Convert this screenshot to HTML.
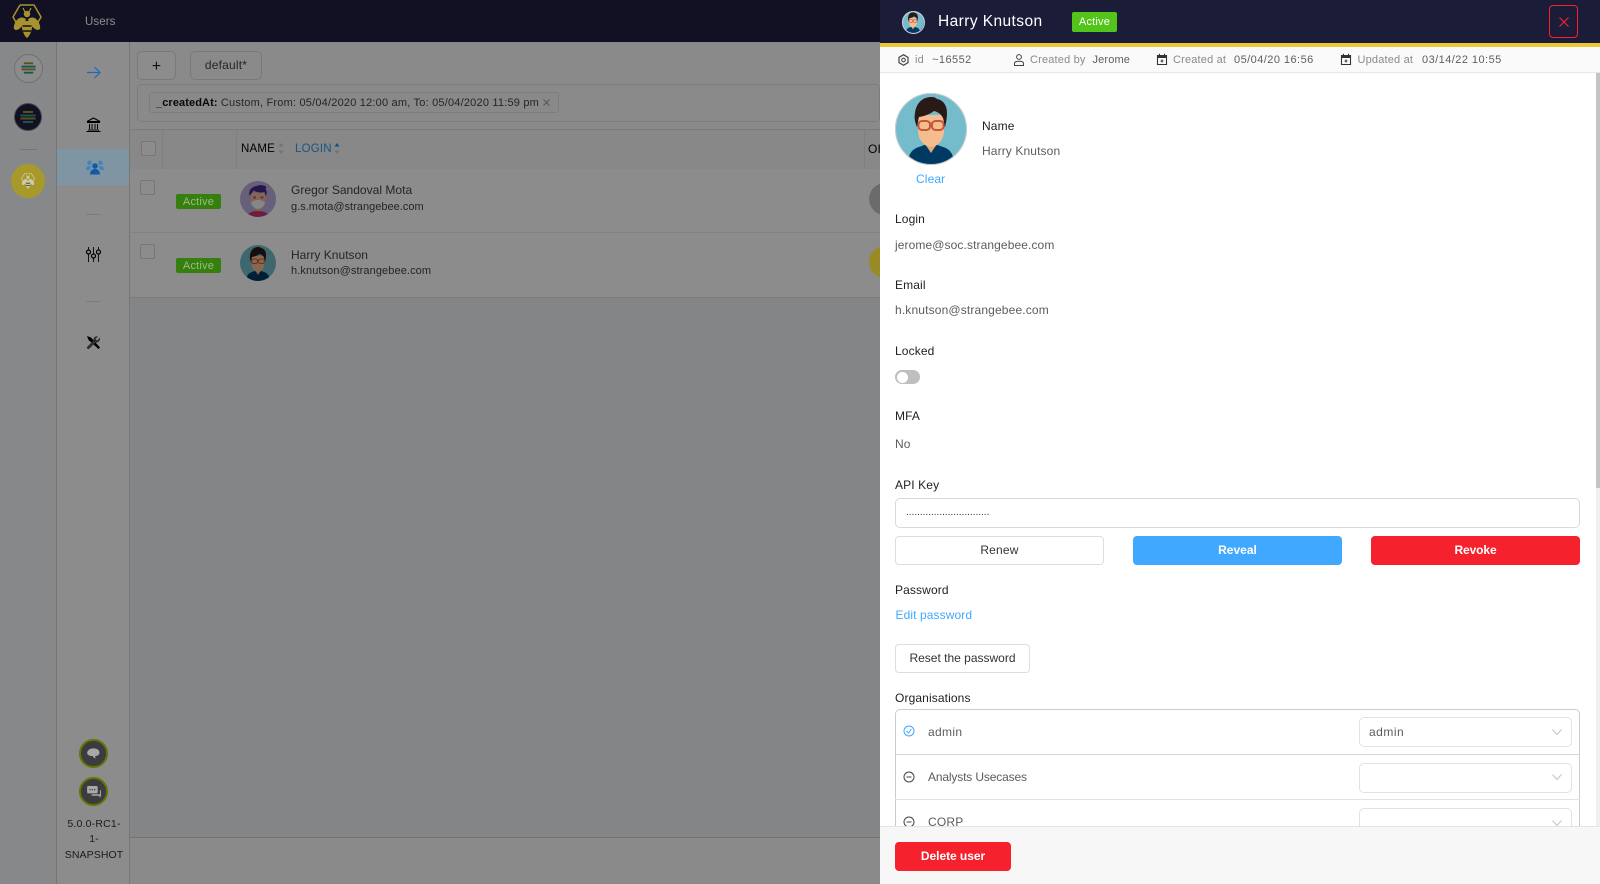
<!DOCTYPE html>
<html><head><meta charset="utf-8"><title>Users</title>
<style>
html,body{margin:0;padding:0;width:1600px;height:884px;overflow:hidden;background:#f0f0f1;font-family:"Liberation Sans",sans-serif;}
.a{position:absolute;box-sizing:border-box}
.t{position:absolute;white-space:nowrap;transform:translateY(-50%);font-size:12px;line-height:16px;color:#5c5c5c;letter-spacing:.12px}
.l{color:#1f1f1f}
.m{font-size:11px;color:#8a8a8a;letter-spacing:.18px}
.v{font-size:11px;color:#5e5e5e;letter-spacing:.3px}
.btn{position:absolute;box-sizing:border-box;border:1px solid #ddd;border-radius:4px;background:#fff;text-align:center;font-size:12px;line-height:26px;color:#333;letter-spacing:.2px}
.sel{position:absolute;box-sizing:border-box;width:213.500px;height:30px;border:1px solid #e2e2e2;border-radius:5px;background:#fff}
svg{position:absolute;overflow:visible}
</style></head><body>
<svg width="0" height="0" style="position:absolute"><defs>
<symbol id="harry" viewBox="0 0 72 72">
<clipPath id="c1"><circle cx="36" cy="36" r="36"/></clipPath>
<g clip-path="url(#c1)"><rect width="72" height="72" fill="#74bccc"/>
<path d="M13 72c0-11 4-16 11-18l8-3 4 8 4-8 8 3c7 2 11 7 11 18z" fill="#003a63"/>
<path d="M30 44h12v7l-6 9-6-9z" fill="#e5a877"/>
<path d="M23 22h26v16c0 9-7 16-13 16s-13-7-13-16z" fill="#f5bd8e"/>
<path d="M22 34c-2-5-3-9-2-14 1-9 7-16 16-16 2 0 4 0 6 2 6 1 10 6 10 14 0 5-1 10-2 14-1-2-1-6-2-9-2-4-5-6-9-7-4 3-9 5-15 6-1 3-1 7-2 10z" fill="#2a1a17"/>
<rect x="23.500" y="28" width="11.500" height="9" rx="3.500" fill="none" stroke="#c9573f" stroke-width="2"/>
<rect x="37" y="28" width="11.500" height="9" rx="3.500" fill="none" stroke="#c9573f" stroke-width="2"/>
<path d="M35 30h2" stroke="#c9573f" stroke-width="1.500"/></g>
</symbol>
<symbol id="greg" viewBox="0 0 72 72">
<clipPath id="c2"><circle cx="36" cy="36" r="36"/></clipPath>
<g clip-path="url(#c2)"><rect width="72" height="72" fill="#bdb0e0"/>
<path d="M14 72c1-8 9-12 22-12s21 4 22 12z" fill="#c8386e"/>
<rect x="30" y="46" width="12" height="14" fill="#eab08c"/>
<path d="M21 24h30v14c0 9-7 16-15 16s-15-7-15-16z" fill="#f2bd9a"/>
<path d="M22 44c3-4 8-6 14-6s11 2 14 6c-2 7-8 12-14 12s-12-5-14-12z" fill="#f4f4f4"/>
<path d="M19 30c-2-10 2-18 14-20 6-3 16-2 20 2-2 2-2 4 0 8 1 4 0 7-2 10l-2-8c-7 2-16 1-22-3-2 4-5 7-8 11z" fill="#46298a"/>
<circle cx="29" cy="33" r="3" fill="#a8477a" opacity=".7"/><circle cx="44" cy="33" r="3" fill="#a8477a" opacity=".7"/></g>
</symbol>
<symbol id="bee" viewBox="0 0 30 35">
<path d="M8 1h14l7 12-4 7M5 20L1 13 8 1" fill="none" stroke="currentColor" stroke-width="1.500"/>
<path d="M11 4l2 4M19 4l-2 4" stroke="currentColor" stroke-width="1.200"/>
<circle cx="15" cy="10" r="3.200" fill="currentColor"/>
<path d="M12 14C8 12 3 16 2 22c-1 4 2 5 5 3 3-2 6-6 7-10zM18 14c4-2 9 2 10 8 1 4-2 5-5 3-3-2-6-6-7-10z" fill="currentColor"/>
<path d="M10.500 17h9c1 3 1 6 0 9-1 4-3 7-4.500 8-1.500-1-3.500-4-4.500-8-1-3-1-6 0-9z" fill="currentColor"/>
<path d="M10.500 22h9M11 27h8" stroke="#111" stroke-width="1.500"/>
</symbol>
<symbol id="hive" viewBox="0 0 16 12">
<path d="M3 1h10" stroke="#a8932a" stroke-width="2"/><path d="M0.500 4.500h15" stroke="#2a9a9a" stroke-width="2"/><path d="M0.500 7.500h15" stroke="#a8932a" stroke-width="2"/><path d="M3 11h10" stroke="#2a9a9a" stroke-width="2"/>
</symbol>
<symbol id="cal" viewBox="0 0 12 12">
<path d="M1.500 2.500h9v9h-9z" fill="none" stroke="#333" stroke-width="1.100"/><path d="M1.500 2.500h9v2.500h-9z" fill="#333"/><path d="M3.500 .8v2M8.500 .8v2" stroke="#333" stroke-width="1.100"/><path d="M4.500 8h3M6 6.500v3" stroke="#333" stroke-width="1"/>
</symbol>
<symbol id="chev" viewBox="0 0 10 6"><path d="M.5.5L5 5.500 9.500.5" fill="none" stroke="#c4c4c4" stroke-width="1"/></symbol>
<symbol id="minus" viewBox="0 0 12 12"><circle cx="6" cy="6" r="5" fill="none" stroke="#444" stroke-width="1"/><path d="M3.500 6h5" stroke="#444" stroke-width="1"/></symbol>
</defs></svg>

<!-- BACKGROUND APP -->
<div class="a" style="left:0;top:0;width:880px;height:884px;background:#f2f4f6;overflow:hidden">
  <div class="a" style="left:0;top:0;width:880px;height:42px;background:#1f2040"></div>
  <div class="t" style="left:85px;top:21.500px;color:#fff;font-size:11.500px;letter-spacing:.1px">Users</div>
  <div class="a" style="left:0;top:42px;width:57px;height:842px;background:#f5f7f9;border-right:1px solid #d8d8d8"></div>
  <div class="a" style="left:57px;top:42px;width:73px;height:842px;background:#fff;border-right:1px solid #d8d8d8"></div>
  <div class="a" style="left:20px;top:149px;width:17px;height:1px;background:#d5d5d5"></div>
  <div class="a" style="left:86px;top:214px;width:15px;height:1px;background:#e2e2e2"></div>
  <div class="a" style="left:86px;top:301px;width:15px;height:1px;background:#e2e2e2"></div>
  <div class="a" style="left:14px;top:54px;width:29px;height:29px;border-radius:50%;background:#fff;border:1px solid #ccc"></div>
  <svg style="left:21px;top:62px" width="15" height="12"><use href="#hive"/></svg>
  <div class="a" style="left:14px;top:103px;width:28px;height:28px;border-radius:50%;background:#1f2040;border:1px solid #888"></div>
  <svg style="left:20px;top:111px" width="16" height="12"><use href="#hive"/></svg>
  <svg style="left:86px;top:117px" width="15" height="15" viewBox="0 0 15 15"><path d="M7.500 1L14 4.500H1zM1 5.500h13M2 13h11M.5 14.500h14M3.500 7v5M6 7v5M9 7v5M11.500 7v5" fill="none" stroke="#000" stroke-width="1"/></svg>
  <svg style="left:86px;top:247px" width="15" height="15" viewBox="0 0 15 15"><path d="M2.500 0v15M7.500 0v15M12.500 0v15" stroke="#222" stroke-width="1"/><circle cx="2.500" cy="5" r="2" fill="#fff" stroke="#000" stroke-width="1.200"/><circle cx="7.500" cy="9" r="2" fill="#fff" stroke="#000" stroke-width="1.200"/><circle cx="12.500" cy="5" r="2" fill="#fff" stroke="#000" stroke-width="1.200"/></svg>
  <svg style="left:86px;top:335px" width="15" height="15" viewBox="0 0 15 15"><path d="M1 1l4 1.500 9 10-1.500 1.500-10-9z" fill="#000"/><path d="M14 2.500L11 5.500 9.500 4 12 1.500C9.500 .5 7 2.500 7.500 5.500L1 12c-.8 1 .8 2.500 2 2l6.500-6.500c3 .5 5-2 4.500-5z" fill="#555"/></svg>
  <div class="t" style="left:58px;width:72px;text-align:center;top:823.500px;font-size:10.500px;color:#333;letter-spacing:.2px">5.0.0-RC1-</div>
  <div class="t" style="left:58px;width:72px;text-align:center;top:839px;font-size:10.500px;color:#333">1-</div>
  <div class="t" style="left:58px;width:72px;text-align:center;top:854.500px;font-size:10.500px;color:#333;letter-spacing:.1px">SNAPSHOT</div>

  <div class="a" style="left:130px;top:42px;width:750px;height:256px;background:#fcfcfc"></div>
  <div class="btn" style="left:137px;top:51px;width:39px;height:29px;font-size:16px;line-height:29px;color:#222;border-radius:5px">+</div>
  <div class="btn" style="left:190px;top:51px;width:72px;height:29px;color:#444;border-radius:5px;background:#fcfcfc">default*</div>
  <div class="a" style="left:137px;top:84px;width:743px;height:38px;border:1px solid #e2e2e2;border-radius:5px;background:#fcfcfc"></div>
  <div class="a" style="left:149px;top:92px;width:410px;height:21px;border:1px solid #e4e4e4;border-radius:3px;background:#fafafa"></div>
  <div class="t" style="left:156px;top:102.500px;font-size:11px;color:#444;letter-spacing:.2px"><b style="color:#111;letter-spacing:.1px">_createdAt:</b> Custom, From: 05/04/2020 12:00 am, To: 05/04/2020 11:59 pm</div>
  <svg style="left:543px;top:99px" width="7" height="7" viewBox="0 0 7 7"><path d="M.5.5l6 6M6.500.5l-6 6" stroke="#999" stroke-width="1"/></svg>
  <div class="a" style="left:130px;top:129px;width:750px;height:1px;background:#e0e0e0"></div>
  <div class="a" style="left:130px;top:130px;width:750px;height:39px;background:#f8f8f8"></div>
  <div class="a" style="left:162px;top:130px;width:1px;height:39px;background:#e8e8e8"></div>
  <div class="a" style="left:236px;top:130px;width:1px;height:39px;background:#e8e8e8"></div>
  <div class="a" style="left:864px;top:130px;width:1px;height:39px;background:#e8e8e8"></div>
  <div class="a" style="left:141px;top:141px;width:15px;height:15px;border:1px solid #d9d9d9;border-radius:2px;background:#fff"></div>
  <div class="t" style="left:241px;top:149px;color:#000;font-size:11.500px;letter-spacing:.2px">NAME</div>
  <svg style="left:278px;top:143px" width="6" height="11" viewBox="0 0 6 11"><path d="M3 0l2.500 3.500h-5zM3 11L.5 7.500h5z" fill="#cfcfcf"/></svg>
  <div class="t" style="left:295px;top:149px;color:#2a9df4;font-size:11.500px;letter-spacing:.2px">LOGIN</div>
  <svg style="left:334px;top:143px" width="6" height="11" viewBox="0 0 6 11"><path d="M3 0l2.500 3.500h-5z" fill="#1b8fe8"/><path d="M3 11L.5 7.500h5z" fill="#cfcfcf"/></svg>
  <div class="t" style="left:868px;top:149px;color:#000;font-size:12px">OI</div>

  <div class="a" style="left:130px;top:169px;width:750px;height:63px;background:#fff"></div>
  <div class="a" style="left:130px;top:232px;width:750px;height:1px;background:#ededed"></div>
  <div class="a" style="left:130px;top:233px;width:750px;height:64px;background:#fff"></div>
  <div class="a" style="left:130px;top:297px;width:750px;height:1px;background:#e4e4e4"></div>
  <div class="a" style="left:140px;top:180px;width:15px;height:15px;border:1px solid #d9d9d9;border-radius:2px;background:#fff"></div>
  <div class="a" style="left:140px;top:244px;width:15px;height:15px;border:1px solid #d9d9d9;border-radius:2px;background:#fff"></div>
  <svg style="left:240px;top:181px" width="36" height="36"><use href="#greg" width="36" height="36"/></svg>
  <svg style="left:240px;top:245px" width="36" height="36"><use href="#harry" width="36" height="36"/></svg>
  <div class="t" style="left:291px;top:189.500px;font-size:12px;color:#444;letter-spacing:.02px">Gregor Sandoval Mota</div>
  <div class="t" style="left:291px;top:206.500px;font-size:11px;color:#444;letter-spacing:.02px">g.s.mota@strangebee.com</div>
  <div class="t" style="left:291px;top:254.500px;font-size:12px;color:#444;letter-spacing:.02px">Harry Knutson</div>
  <div class="t" style="left:291px;top:271px;font-size:11px;color:#444;letter-spacing:.1px">h.knutson@strangebee.com</div>
  <div class="a" style="left:130px;top:298px;width:750px;height:539px;background:#f0f2f5"></div>
  <div class="a" style="left:130px;top:837px;width:750px;height:47px;background:#fbfbfb;border-top:1px solid #d4d4d4"></div>
  <div class="a" style="left:869px;top:183px;width:32px;height:32px;border-radius:50%;background:#c4c4c4"></div>
  <div class="a" style="left:0;top:0;width:880px;height:884px;background:rgba(0,0,0,.45)"></div>

  <!-- items that stay saturated in the dim layer -->
  <div class="a" style="left:57px;top:149px;width:72px;height:36px;background:#7f95a4"></div>
  <svg style="left:87px;top:66px" width="14" height="13" viewBox="0 0 14 13"><path d="M0 6.500h13M7.500 1l5.500 5.500L7.500 12" fill="none" stroke="#1b6cb8" stroke-width="1.200"/></svg>
  <svg style="left:86px;top:160px" width="18" height="15" viewBox="0 0 18 15"><circle cx="3.500" cy="2.800" r="2.300" fill="#4583bb"/><circle cx="14.500" cy="2.800" r="2.300" fill="#4583bb"/><circle cx="9" cy="6" r="2.800" fill="#125aa5"/><path d="M0 10c0-3 1.500-4 3.500-4 1 0 1.500.3 2 .7C4.500 7.500 4 9 4 10zM18 10c0-3-1.500-4-3.500-4-1 0-1.500.3-2 .7 1 .8 1.500 2.300 1.500 3.300z" fill="#4583bb"/><path d="M4 14.500c0-3.500 2-5.500 5-5.500s5 2 5 5.500z" fill="#125aa5"/></svg>
  <svg style="left:12px;top:4px;color:#a8922e" width="30" height="35"><use href="#bee" width="30" height="35"/></svg>
  <div class="a" style="left:11px;top:164px;width:34px;height:34px;border-radius:50%;background:#a89a2a"></div>
  <svg style="left:21px;top:172px;color:#d0caa8" width="14" height="18"><use href="#bee" width="14" height="18"/></svg>
  <div class="a" style="left:869px;top:246px;width:32px;height:32px;border-radius:50%;background:#9a8a26"></div>
  <div class="a" style="left:176px;top:194px;width:45px;height:15px;background:#357f0e;border-radius:2px;text-align:center;font-size:11px;line-height:17px;color:#9fbb84;letter-spacing:.2px">Active</div>
  <div class="a" style="left:176px;top:258px;width:45px;height:15px;background:#357f0e;border-radius:2px;text-align:center;font-size:11px;line-height:17px;color:#9fbb84;letter-spacing:.2px">Active</div>
  <div class="a" style="left:79px;top:739px;width:29px;height:29px;border-radius:50%;background:#3a3c40;border:2.500px solid #667300"></div>
  <div class="a" style="left:79px;top:777px;width:29px;height:29px;border-radius:50%;background:#3a3c40;border:2.500px solid #667300"></div>
  <svg style="left:87px;top:748px" width="13" height="11" viewBox="0 0 15 13"><path d="M3 1.500C5 0 10 0 12 1.500c2 1 3 3 2.500 5-.5 2-2.500 3-5 3 0 1 0 2 1 3-2-.5-3.500-1.500-4-3-3.500 0-6-1-6.500-3.500C0 4 1 2.500 3 1.500z" fill="#a8a8a8"/></svg>
  <svg style="left:87px;top:786px" width="14" height="12" viewBox="0 0 15 13"><rect x="0" y="0" width="11.500" height="8" rx="1.500" fill="#a8a8a8"/><path d="M5 9h9V4.500h1V11l-1.500 2V10.500H5z" fill="#a8a8a8"/><path d="M2.500 4h1.500M5 4h1.500M7.500 4h1.500" stroke="#3a3c40" stroke-width="1.200"/></svg>
</div>

<!-- DRAWER -->
<div class="a" style="left:880px;top:0;width:720px;height:884px;background:#fff;overflow:hidden">
  <div class="a" style="left:0;top:0;width:720px;height:43px;background:#1a1c38"></div>
  <div class="a" style="left:0;top:43px;width:720px;height:4px;background:#ecc934"></div>
  <svg style="left:22px;top:11px" width="22" height="22"><use href="#harry" width="22" height="22"/></svg>
  <div class="a" style="left:21.500px;top:10.500px;width:23px;height:23px;border-radius:50%;border:1px solid #ccd"></div>
  <div class="t" style="left:58px;top:22px;font-size:15.500px;color:#fff;letter-spacing:.42px">Harry Knutson</div>
  <div class="a" style="left:192px;top:11.500px;width:45px;height:20.500px;background:#52c41a;border-radius:2px;color:#fff;text-align:center;font-size:11px;line-height:21px;letter-spacing:.2px">Active</div>
  <div class="a" style="left:669px;top:5px;width:29px;height:33px;border:1px solid #f5222d;border-radius:4px"></div>
  <svg style="left:679px;top:17px" width="10" height="10" viewBox="0 0 10 10"><path d="M.5.5l9 9M9.500.5l-9 9" stroke="#f5222d" stroke-width="1.200"/></svg>

  <div class="a" style="left:0;top:47px;width:720px;height:26px;background:#fafafa;border-bottom:1px solid #e8e8e8"></div>
  <svg style="left:18px;top:54px" width="11" height="12" viewBox="0 0 11 12"><path d="M5.500.7l4.500 2.600v5.400l-4.500 2.600L1 8.700V3.300z" fill="none" stroke="#444" stroke-width="1.200"/><circle cx="5.500" cy="6" r="1.800" fill="none" stroke="#444" stroke-width="1.100"/></svg>
  <div class="t m" style="left:35px;top:60px">id</div>
  <div class="t v" style="left:52px;top:60px;letter-spacing:.45px">~16552</div>
  <svg style="left:134px;top:54px" width="10" height="12" viewBox="0 0 10 12"><circle cx="5" cy="3" r="2.400" fill="none" stroke="#444" stroke-width="1"/><path d="M.5 11.500V9.500c0-1.500 1.500-2.200 4.500-2.200s4.500.7 4.500 2.200v2z" fill="none" stroke="#444" stroke-width="1"/></svg>
  <div class="t m" style="left:150px;top:60px">Created by</div>
  <div class="t v" style="left:212.500px;top:60px;letter-spacing:.15px">Jerome</div>
  <svg style="left:276px;top:53px" width="12" height="12"><use href="#cal" width="12" height="12"/></svg>
  <div class="t m" style="left:293px;top:60px">Created at</div>
  <div class="t v" style="left:354px;top:60px;letter-spacing:.45px">05/04/20 16:56</div>
  <svg style="left:460px;top:53px" width="12" height="12"><use href="#cal" width="12" height="12"/></svg>
  <div class="t m" style="left:477.500px;top:60px">Updated at</div>
  <div class="t v" style="left:542px;top:60px;letter-spacing:.45px">03/14/22 10:55</div>

  <svg style="left:15px;top:92.500px" width="72" height="72"><use href="#harry" width="72" height="72"/></svg>
  <div class="a" style="left:15px;top:92.500px;width:72px;height:72px;border-radius:50%;border:1px solid #ccc"></div>
  <div class="t" style="left:36px;top:179px;color:#40a9ff">Clear</div>
  <div class="t l" style="left:102px;top:125.500px">Name</div>
  <div class="t" style="left:102px;top:150.500px">Harry Knutson</div>
  <div class="t l" style="left:15px;top:218.500px">Login</div>
  <div class="t" style="left:15px;top:244.500px;letter-spacing:.1px">jerome@soc.strangebee.com</div>
  <div class="t l" style="left:15px;top:284.500px">Email</div>
  <div class="t" style="left:15px;top:309.500px;letter-spacing:.15px">h.knutson@strangebee.com</div>
  <div class="t l" style="left:15px;top:351px">Locked</div>
  <div class="a" style="left:15px;top:370px;width:25px;height:14px;border-radius:7px;background:#bfbfbf"></div>
  <div class="a" style="left:16.500px;top:371.500px;width:11px;height:11px;border-radius:50%;background:#fff"></div>
  <div class="t l" style="left:15px;top:416px">MFA</div>
  <div class="t" style="left:15px;top:444px">No</div>
  <div class="t l" style="left:15px;top:485px">API Key</div>
  <div class="a" style="left:15px;top:498px;width:685px;height:30px;border:1px solid #d9d9d9;border-radius:5px"></div>
  <div class="t" style="left:26px;top:512.500px;font-size:10px;color:#333;letter-spacing:0">..............................</div>
  <div class="btn" style="left:15px;top:536px;width:209px;height:29px;border-color:#ddd">Renew</div>
  <div class="btn" style="left:253px;top:536px;width:209px;height:29px;background:#40a9ff;border-color:#40a9ff;color:#fff;font-weight:bold;letter-spacing:0">Reveal</div>
  <div class="btn" style="left:491px;top:536px;width:209px;height:29px;background:#f5222d;border-color:#f5222d;color:#fff;font-weight:bold;letter-spacing:-.1px">Revoke</div>
  <div class="t l" style="left:15px;top:590px">Password</div>
  <div class="t" style="left:15.500px;top:615px;color:#40a9ff;letter-spacing:.1px">Edit password</div>
  <div class="btn" style="left:15px;top:644px;width:135px;height:29px;letter-spacing:0">Reset the password</div>
  <div class="t l" style="left:15px;top:698px">Organisations</div>
  <div class="a" style="left:15px;top:709px;width:685px;height:140px;border:1px solid #ccc;border-radius:5px"></div>
  <div class="a" style="left:15px;top:754px;width:685px;height:1px;background:#d4d4d4"></div>
  <div class="a" style="left:15px;top:799px;width:685px;height:1px;background:#e2e2e2"></div>
  <div class="sel" style="left:478.500px;top:717px"></div>
  <div class="sel" style="left:478.500px;top:763px"></div>
  <div class="sel" style="left:478.500px;top:808px"></div>
  <svg style="left:22.500px;top:725px" width="12" height="12" viewBox="0 0 12 12"><circle cx="6" cy="6" r="5" fill="none" stroke="#40a9ff" stroke-width="1"/><path d="M3.500 6l2 2 3-4" fill="none" stroke="#40a9ff" stroke-width="1"/></svg>
  <div class="t" style="left:48px;top:732px;letter-spacing:.35px">admin</div>
  <div class="t" style="left:489px;top:731.500px;letter-spacing:.5px">admin</div>
  <svg style="left:22.500px;top:771px" width="12" height="12"><use href="#minus" width="12" height="12"/></svg>
  <div class="t" style="left:48px;top:777px;letter-spacing:-.15px">Analysts Usecases</div>
  <svg style="left:22.500px;top:816px" width="12" height="12"><use href="#minus" width="12" height="12"/></svg>
  <div class="t" style="left:48px;top:822px;letter-spacing:.2px">CORP</div>
  <svg style="left:672px;top:729px" width="10" height="6"><use href="#chev" width="10" height="6"/></svg>
  <svg style="left:672px;top:774px" width="10" height="6"><use href="#chev" width="10" height="6"/></svg>
  <svg style="left:672px;top:820px" width="10" height="6"><use href="#chev" width="10" height="6"/></svg>

  <div class="a" style="left:716px;top:73px;width:4px;height:753px;background:#f0f0f0"></div>
  <div class="a" style="left:716px;top:73px;width:4px;height:415px;background:#c4c4c4"></div>
  <div class="a" style="left:0;top:826px;width:720px;height:58px;background:#f7f7f7;border-top:1px solid #e4e4e4"></div>
  <div class="btn" style="left:15px;top:842px;width:116px;height:29px;background:#f5222d;border-color:#f5222d;color:#fff;font-weight:bold;letter-spacing:-.05px">Delete user</div>
</div>
</body></html>
